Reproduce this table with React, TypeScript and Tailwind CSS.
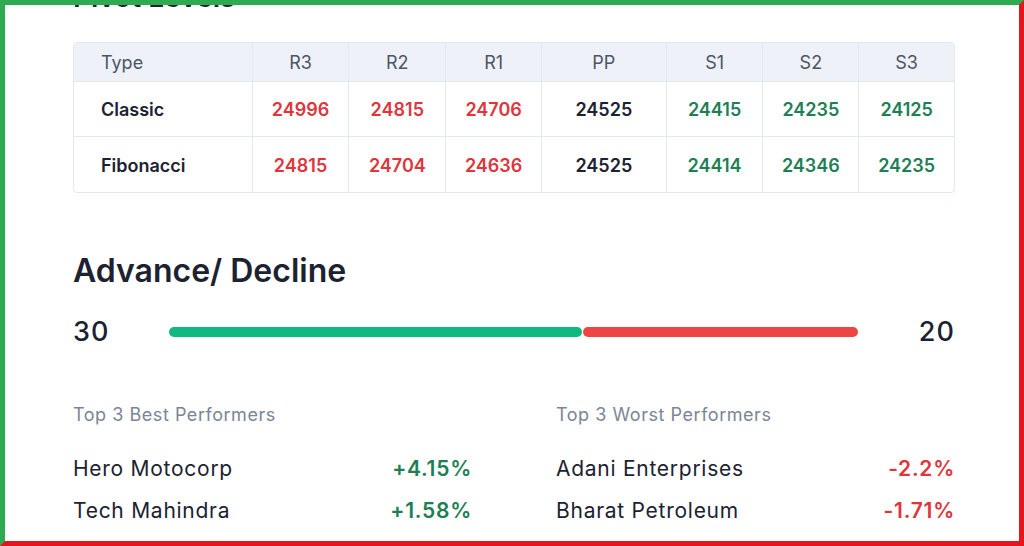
import React from "react";

const cols = ["R3", "R2", "R1", "PP", "S1", "S2", "S3"];
const widths = ["w-[97px]", "w-[97px]", "w-[96px]", "w-[125px]", "w-[97px]", "w-[96px]", "w-[95px]"];

const rows = [
  { name: "Classic", values: ["24996", "24815", "24706", "24525", "24415", "24235", "24125"] },
  { name: "Fibonacci", values: ["24815", "24704", "24636", "24525", "24414", "24346", "24235"] },
];

function tone(i: number) {
  if (i < 3) return "text-[#e0353b]";
  if (i === 3) return "text-[#1c2231]";
  return "text-[#1d7f56]";
}

const best = [
  { name: "Hero Motocorp", change: "+4.15%" },
  { name: "Tech Mahindra", change: "+1.58%" },
];

const worst = [
  { name: "Adani Enterprises", change: "-2.2%" },
  { name: "Bharat Petroleum", change: "-1.71%" },
];

function Performers({ title, items, up }: { title: string; items: { name: string; change: string }[]; up: boolean }) {
  return (
    <div>
      <div className="text-[18px] leading-[24px] tracking-[0.03em] text-[#7b8596]">{title}</div>
      <div className="mt-[27px] flex flex-col gap-[12px]">
        {items.map((it) => (
          <div key={it.name} className="flex justify-between items-center h-[30px] text-[21px] tracking-[0.035em]">
            <span className="text-[#1c2231]">{it.name}</span>
            <span className={"font-semibold " + (up ? "text-[#1d7f56]" : "text-[#e0353b]")}>{it.change}</span>
          </div>
        ))}
      </div>
    </div>
  );
}

export default function App() {
  return (
    <div
      className="w-[1024px] h-[546px] overflow-hidden bg-white border-t-[5px] border-l-[5px] border-t-[#2eaa50] border-l-[#2eaa50] border-r-[5px] border-b-[5px] border-r-[#e5151e] border-b-[#e5151e]"
      style={{ fontFamily: "Inter, 'Noto Sans', sans-serif" }}
    >
      <div className="pl-[68px] w-[950px]">
        <h2 className="-mt-[26px] h-[36px] leading-[36px] text-[28px] font-semibold text-[#1c2231]">Pivot Levels</h2>

        <div className="mt-[27px] w-[882px] border border-[#e3e8ef] rounded-[4px] overflow-hidden">
          <div className="flex h-[39px] bg-[#eef2f8] text-[18px] text-[#4b5565] border-b border-[#e3e8ef]">
            <div className="w-[179px] flex items-center pl-[27px] border-r border-[#e3e8ef]">Type</div>
            {cols.map((c, i) => (
              <div
                key={c}
                className={widths[i] + " flex items-center justify-center " + (i < cols.length - 1 ? "border-r border-[#e3e8ef]" : "")}
              >
                {c}
              </div>
            ))}
          </div>
          {rows.map((r, ri) => (
            <div
              key={r.name}
              className={"flex h-[55px] text-[18px] font-semibold " + (ri === 0 ? "border-b border-[#e3e8ef]" : "")}
            >
              <div className="w-[179px] flex items-center pl-[27px] pt-[1px] text-[#1c2231] border-r border-[#e3e8ef]">{r.name}</div>
              {r.values.map((v, i) => (
                <div
                  key={i}
                  className={widths[i] + " flex items-center justify-center pt-[1px] " + tone(i) + (i < cols.length - 1 ? " border-r border-[#e3e8ef]" : "")}
                >
                  {v}
                </div>
              ))}
            </div>
          ))}
        </div>

        <h2 className="mt-[58px] h-[40px] leading-[40px] text-[32px] font-semibold text-[#1c2231]">Advance/ Decline</h2>

        <div className="mt-[25px] w-[882px] flex items-center h-[32px] text-[27px] tracking-[0.04em] font-medium text-[#1c2231]">
          <div className="w-[96px]">30</div>
          <div className="flex-1 flex h-[10px] gap-[1px]">
            <div className="h-full rounded-full bg-[#10b981]" style={{ width: "60%" }} />
            <div className="h-full rounded-full bg-[#ef4444] flex-1" />
          </div>
          <div className="w-[97px] text-right">20</div>
        </div>

        <div className="mt-[55px] w-[882px] grid grid-cols-2 gap-x-[84px]">
          <Performers title="Top 3 Best Performers" items={best} up />
          <Performers title="Top 3 Worst Performers" items={worst} up={false} />
        </div>
      </div>
    </div>
  );
}
